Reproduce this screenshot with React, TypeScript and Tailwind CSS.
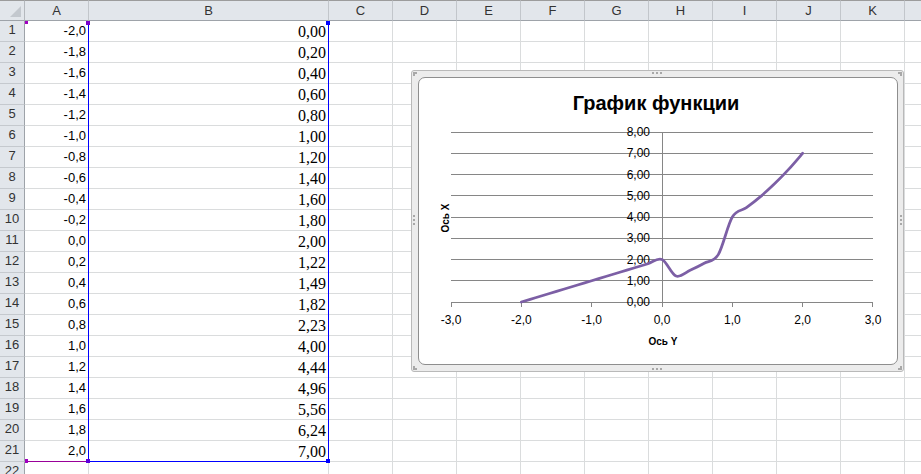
import React from 'react';

const xs = [-2.0, -1.8, -1.6, -1.4, -1.2, -1.0, -0.8, -0.6, -0.4, -0.2, 0.0, 0.2, 0.4, 0.6, 0.8, 1.0, 1.2, 1.4, 1.6, 1.8, 2.0];
const ys = [0, 0.2, 0.4, 0.6, 0.8, 1.0, 1.2, 1.4, 1.6, 1.8, 2.0, 1.22, 1.49, 1.82, 2.23, 4.0, 4.44, 4.96, 5.56, 6.24, 7.0];

const cols = ['C', 'D', 'E', 'F', 'G', 'H', 'I', 'J', 'K', ''];

const fmt = (n: number, d: number) => n.toFixed(d).replace('.', ',');

// chart geometry, relative to the inner white box
const X0 = 243;
const XS = 70.33;
const Y0 = 224;
const YS = 21.25;
const px = (x: number) => X0 + x * XS;
const py = (y: number) => Y0 - y * YS;

function smoothPath() {
  const p = xs.map((x, i) => [px(x), py(ys[i])]);
  let d = `M${p[0][0]},${p[0][1]}`;
  for (let i = 0; i < p.length - 1; i++) {
    const a = p[i - 1] || p[i];
    const b = p[i];
    const c = p[i + 1];
    const e = p[i + 2] || c;
    const c1 = [b[0] + (c[0] - a[0]) / 6, b[1] + (c[1] - a[1]) / 6];
    const c2 = [c[0] - (e[0] - b[0]) / 6, c[1] - (e[1] - b[1]) / 6];
    d += ` C${c1[0].toFixed(2)},${c1[1].toFixed(2)} ${c2[0].toFixed(2)},${c2[1].toFixed(2)} ${c[0].toFixed(2)},${c[1].toFixed(2)}`;
  }
  return d;
}

function Grip({ className }: { className: string }) {
  return <span className={`absolute border-dotted border-[#a8a8a8] ${className}`} />;
}

function Chart() {
  const gridY = [0, 1, 2, 3, 4, 5, 6, 7, 8];
  const gridX = [-3, -2, -1, 0, 1, 2, 3];
  return (
    <div className="absolute left-[411px] top-[70px] w-[493px] h-[302px] rounded-[3px] border border-[#b9b9b9] bg-[#ececec] pl-[6px] pt-[6px] pr-[5px] pb-[6px]">
      <Grip className="left-[1px] top-[1px] w-[4px] h-[4px] border-t-2 border-l-2" />
      <Grip className="right-[1px] top-[1px] w-[4px] h-[4px] border-t-2 border-r-2" />
      <Grip className="left-[1px] bottom-[1px] w-[4px] h-[4px] border-b-2 border-l-2" />
      <Grip className="right-[1px] bottom-[1px] w-[4px] h-[4px] border-b-2 border-r-2" />
      <Grip className="left-[240px] top-[1px] w-[10px] h-[2px] border-t-2" />
      <Grip className="left-[240px] bottom-[1px] w-[10px] h-[2px] border-t-2" />
      <Grip className="left-[1px] top-[144px] w-[2px] h-[10px] border-l-2" />
      <Grip className="right-[1px] top-[144px] w-[2px] h-[10px] border-l-2" />

      <div className="h-full rounded-[7px] border border-[#8e8e8e] bg-white overflow-hidden">
        <svg width="478" height="286" className="block" style={{ fontFamily: '"Liberation Sans", Arial, sans-serif' }}>
          <text x="237" y="32" textAnchor="middle" fontSize="20" fontWeight="bold" fill="#000">
            График функции
          </text>
          {gridY.map((v) => (
            <line key={v} x1="32" x2="454" y1={py(v)} y2={py(v)} stroke="#868686" strokeWidth="1" shapeRendering="crispEdges" />
          ))}
          <line x1={X0} x2={X0} y1={py(8)} y2={Y0} stroke="#868686" strokeWidth="1" shapeRendering="crispEdges" />
          {gridX.map((v) => (
            <line key={v} x1={px(v)} x2={px(v)} y1={Y0} y2={Y0 + 5} stroke="#868686" strokeWidth="1" shapeRendering="crispEdges" />
          ))}
          {gridY.map((v) => (
            <text key={v} x="231" y={py(v) + 4} textAnchor="end" fontSize="12" fill="#000">
              {fmt(v, 2)}
            </text>
          ))}
          {gridX.map((v) => (
            <text key={v} x={px(v)} y={Y0 + 22} textAnchor="middle" fontSize="12" fill="#000">
              {fmt(v, 1)}
            </text>
          ))}
          <text x="244" y="267" textAnchor="middle" fontSize="10" fontWeight="bold" fill="#000">
            Ось Y
          </text>
          <text x="0" y="0" transform="translate(30,140) rotate(-90)" textAnchor="middle" fontSize="10" fontWeight="bold" fill="#000">
            Ось X
          </text>
          <path d={smoothPath()} fill="none" stroke="#7c5fa5" strokeWidth="2.75" strokeLinecap="round" strokeLinejoin="round" />
        </svg>
      </div>
    </div>
  );
}

export default function App() {
  const rows = Array.from({ length: 22 }, (_, i) => i);
  return (
    <div className="relative w-[921px] h-[474px] overflow-hidden bg-white text-[13px] text-black" style={{ fontFamily: '"Liberation Sans", Arial, sans-serif' }}>
      <div className="grid grid-cols-[25px_64px_240px_repeat(10,64px)] auto-rows-[21px]">
        {/* header row */}
        <div className="relative bg-[#e2e6eb] border-t border-[#9c9c9c] border-r border-b border-r-[#b4b8bd] border-b-[#9ea3a9]">
          <span className="absolute right-[3px] bottom-[3px] w-0 h-0 border-l-[11px] border-l-transparent border-b-[11px] border-b-[#c3c8ce]" />
        </div>
        {['A', 'B', ...cols].map((c, i) => (
          <div key={i} className="flex items-center justify-center bg-[#e2e6eb] border-t border-[#9c9c9c] border-r border-b border-r-[#c2c6cb] border-b-[#9ea3a9] text-[#333] text-[13px] pt-[1px]">
            {c}
          </div>
        ))}

        {rows.map((r) => (
          <React.Fragment key={r}>
            <div className="flex items-end justify-center pb-[2px] bg-[#e2e6eb] border-r border-b border-r-[#9ea3a9] border-b-[#c5c9ce] text-[#333]">
              {r + 1}
            </div>
            <div className="flex items-end justify-end pr-[2px] pb-[1px] border-r border-b border-[#dadcdd]">
              {r < 21 ? fmt(xs[r], 1) : ''}
            </div>
            <div
              className="flex items-end justify-end pr-[2px] border-r border-b border-[#dadcdd] text-[16px] leading-[19px]"
              style={{ fontFamily: '"Liberation Serif", "Times New Roman", serif' }}
            >
              {r < 21 ? fmt(ys[r], 2) : ''}
            </div>
            {cols.map((c, i) => (
              <div key={i} className="border-r border-b border-[#dadcdd]" />
            ))}
          </React.Fragment>
        ))}
      </div>

      {/* data range highlights */}
      <div className="absolute left-[88px] top-[21px] w-[241px] h-[441px] border-l border-r border-b border-[#0000ff] pointer-events-none" />
      <div className="absolute left-[25px] top-[461px] w-[64px] h-[1px] bg-[#990099]" />
      <span className="absolute left-[25px] top-[21px] w-[3px] h-[3px] bg-[#a000c0]" />
      <span className="absolute left-[86px] top-[21px] w-[4px] h-[4px] bg-[#7a00cc]" />
      <span className="absolute left-[326px] top-[21px] w-[4px] h-[4px] bg-[#0000ff]" />
      <span className="absolute left-[25px] top-[459px] w-[3px] h-[4px] bg-[#a000c0]" />
      <span className="absolute left-[86px] top-[459px] w-[4px] h-[4px] bg-[#5a00dd]" />
      <span className="absolute left-[326px] top-[459px] w-[4px] h-[4px] bg-[#0000ff]" />

      <Chart />
    </div>
  );
}
